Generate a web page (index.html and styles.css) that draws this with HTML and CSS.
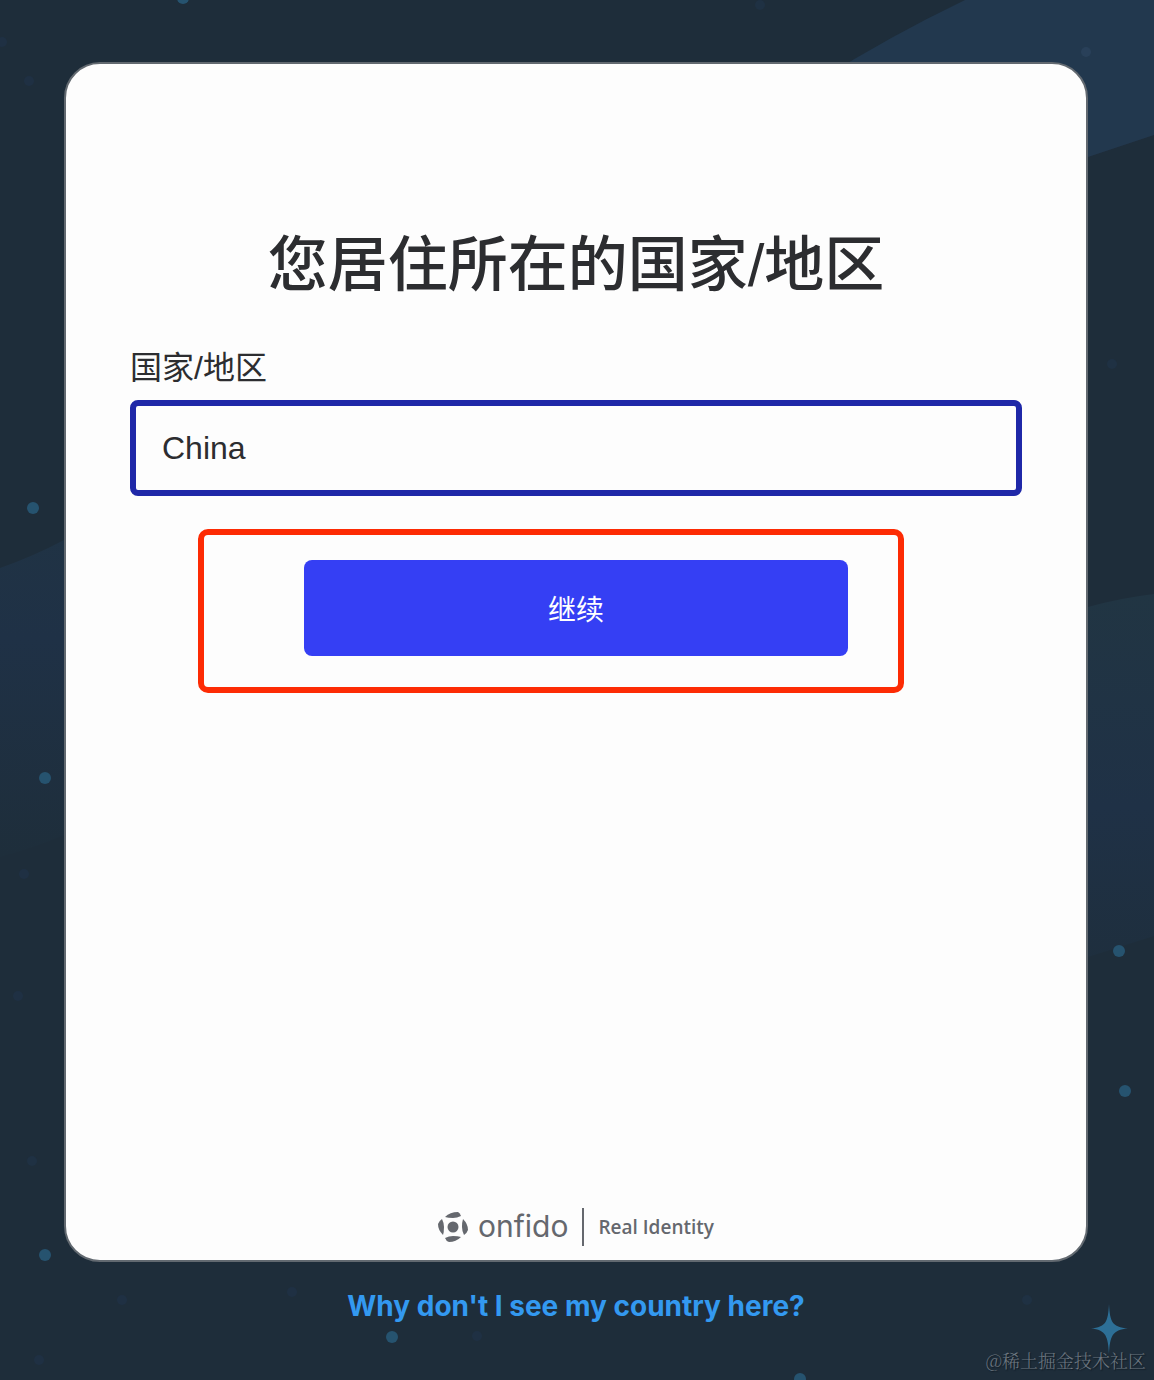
FILE: index.html
```html
<!DOCTYPE html>
<html lang="zh-CN">
<head>
    <meta charset="UTF-8">
    <meta name="viewport" content="width=device-width, initial-scale=1.0">
    <title>您居住所在的国家/地区</title>
    <link rel="stylesheet" href="styles.css">
</head>
<body>
    <!-- Fondo: bandas, puntos y estrella -->
    <svg class="background" viewBox="0 0 1154 1380" preserveAspectRatio="xMidYMid slice" aria-hidden="true">
        <defs>
            <linearGradient id="band" x1="0" y1="0" x2="0" y2="1">
                <stop offset="0" stop-color="#213543"/>
                <stop offset="0.5" stop-color="#1f3146"/>
                <stop offset="1" stop-color="#1e2e3b"/>
            </linearGradient>
        </defs>
        <path d="M820 80Q890 36 965 0H1154V135L1088 157L820 230Z" fill="#22384e"/>
        <path d="M0 568Q34 556 64 540L400 420V720L64 835Q34 848 0 857Z" fill="url(#band)"/>
        <path d="M800 680L1088 607Q1120 598 1154 594V936L1088 957L800 1020Z" fill="url(#band)"/>
        <g fill="#26536f">
            <circle cx="183" cy="-2" r="6"/>
            <circle cx="33" cy="508" r="6"/>
            <circle cx="45" cy="778" r="6"/>
            <circle cx="1119" cy="951" r="6"/>
            <circle cx="1125" cy="1091" r="6"/>
            <circle cx="45" cy="1255" r="6"/>
            <circle cx="392" cy="1337" r="6"/>
            <circle cx="800" cy="1379" r="6"/>
        </g>
        <g fill="#20334a" opacity="0.6">
            <circle cx="29" cy="81" r="5"/>
            <circle cx="2" cy="42" r="5"/>
            <circle cx="760" cy="5" r="5"/>
            <circle cx="1112" cy="364" r="5"/>
            <circle cx="24" cy="874" r="5"/>
            <circle cx="18" cy="996" r="5"/>
            <circle cx="32" cy="1161" r="5"/>
            <circle cx="122" cy="1300" r="5"/>
            <circle cx="292" cy="1292" r="5"/>
            <circle cx="477" cy="1336" r="5"/>
            <circle cx="1027" cy="1300" r="5"/>
            <circle cx="39" cy="1360" r="5"/>
        </g>
        <circle cx="1086" cy="52" r="5" fill="#294059"/>
        <path d="M1109 1304C1110 1322 1112 1327 1128 1328.500C1112 1330 1110 1336 1109 1354C1108 1336 1106 1330 1091 1328.500C1106 1327 1108 1322 1109 1304Z" fill="#2d6f96"/>
    </svg>

    <main class="page">
        <form class="card">
            <h1>您居住所在的国家/地区</h1>

            <label for="country">国家/地区</label>
            <input type="text" id="country" name="country" value="China">

            <div class="actions">
                <button type="button">继续</button>
                <span class="highlight"></span>
            </div>

            <div class="brand">
                <svg class="brand-icon" viewBox="0 0 30 30" aria-hidden="true">
                    <circle cx="15" cy="15" r="5.500"/>
                    <path d="M7 5Q12 0 20 0Q22 1 23 4Q19 6 15 6Q10 6 7 5Z"/>
                    <path d="M25 7Q30 12 30 18Q29 21 26 23Q24 19 24 15Q24 10 25 7Z"/>
                    <path d="M23 25Q18 30 11 30Q8 29 7 26Q11 24 15 24Q20 24 23 25Z"/>
                    <path d="M5 23Q0 18 0 12Q1 9 4 7Q6 11 6 15Q6 20 5 23Z"/>
                </svg>
                <span class="brand-name">onfido</span>
                <span class="brand-tagline">Real Identity</span>
            </div>
        </form>

        <a class="help" href="#">Why don't I see my country here?</a>
    </main>

    <span class="watermark">@稀土掘金技术社区</span>
</body>
</html>
```
FILE: styles.css
```css
* {
    box-sizing: border-box;
}

body {
    font-family: "Liberation Sans", "Noto Sans CJK SC", sans-serif;
    background-color: #1e2d3a;
    color: #2c2d30;
    margin: 0;
    position: relative;
    overflow-x: hidden;
}

.background {
    position: absolute;
    top: 0;
    left: 0;
    width: 100%;
    height: 100%;
}

.page {
    position: relative;
    display: flex;
    flex-direction: column;
    align-items: center;
    min-height: 100vh;
    padding: 62px 66px 56px 64px;
}

.card {
    display: flex;
    flex-direction: column;
    flex: 1;
    width: 100%;
    padding: 158px 64px 14px;
    background-color: #fdfdfd;
    border: 2px solid #626970;
    border-radius: 36px;
}

h1 {
    margin: 0 0 34px;
    font-size: 60px;
    font-weight: 500;
    line-height: 88px;
    text-align: center;
}

label {
    margin-bottom: 8px;
    font-size: 32px;
    line-height: 48px;
}

input {
    width: 100%;
    height: 96px;
    padding: 0 26px;
    border: 6px solid #1f28a8;
    border-radius: 8px;
    outline: none;
    background-color: #fdfdfd;
    color: #2c2d30;
    font-family: inherit;
    font-size: 32px;
}

.actions {
    position: relative;
    align-self: center;
    width: 100%;
    max-width: 544px;
    margin-top: 64px;
}

button {
    display: block;
    width: 100%;
    height: 96px;
    border: none;
    border-radius: 8px;
    background-color: #353ff4;
    color: #fff;
    font-family: inherit;
    font-size: 28px;
    cursor: pointer;
}

button:hover {
    background-color: #2c35d8;
}

/* marco rojo alrededor del botón */
.highlight {
    position: absolute;
    top: -31px;
    right: -56px;
    bottom: -37px;
    left: -106px;
    border: 6px solid #fd2b04;
    border-radius: 10px;
    pointer-events: none;
}

.brand {
    display: flex;
    align-items: center;
    justify-content: center;
    margin-top: auto;
    color: #65686e;
}

.brand-icon {
    width: 30px;
    height: 30px;
    margin-right: 10px;
    fill: currentColor;
}

.brand-name {
    padding: 0 14px 2px 0;
    border-right: 2px solid #65686e;
    font-family: Inter, sans-serif;
    font-size: 30px;
    line-height: 36px;
}

.brand-tagline {
    padding-left: 14px;
    font-family: "Open Sans", sans-serif;
    font-size: 19px;
    font-weight: 600;
}

.help {
    margin-top: 26px;
    color: #3399f0;
    font-family: Inter, sans-serif;
    font-size: 28px;
    font-weight: 700;
    line-height: 36px;
    text-decoration: none;
}

.watermark {
    position: absolute;
    right: 8px;
    bottom: 8px;
    color: #6d7780;
    font-family: "Noto Serif CJK SC", "Noto Sans CJK SC", serif;
    font-size: 18px;
    font-weight: 300;
    line-height: 24px;
    text-shadow: 1px 1px 1px #111c26;
}
```
